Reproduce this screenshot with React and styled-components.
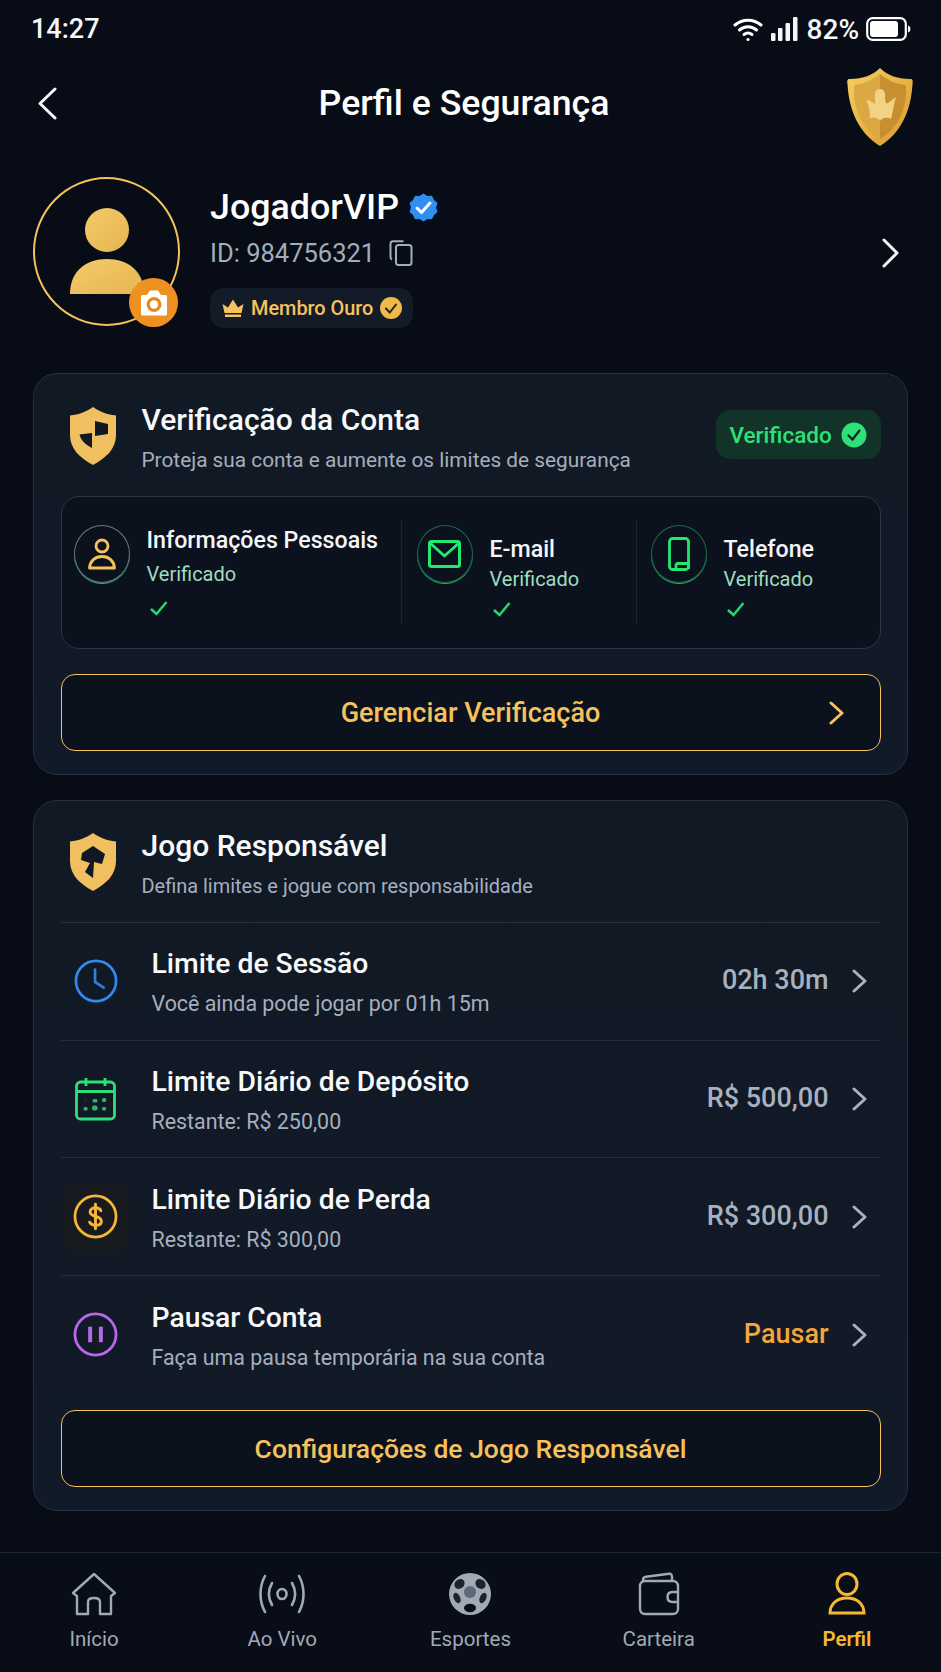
import React from 'react';
import styled, { createGlobalStyle } from 'styled-components';

const GlobalStyle = createGlobalStyle`
  html, body {
    margin: 0;
    padding: 0;
    background: #070c16;
  }
  * { box-sizing: border-box; }
`;

const GOLD = '#f5c25c';
const GREEN = '#2fe07a';

const Page = styled.div`
  width: 941px;
  height: 1672px;
  overflow: hidden;
  display: flex;
  flex-direction: column;
  background: #070c16;
  color: #fff;
  font-family: Roboto, "Noto Sans", sans-serif;
`;

const StatusBar = styled.div`
  height: 56px;
  padding: 2px 30px 0 31px;
  display: flex;
  align-items: center;
  justify-content: space-between;
  font-size: 27px;
  font-weight: 500;
  color: #f6f7f9;
`;

const StatusRight = styled.div`
  display: flex;
  align-items: center;
  gap: 7px;
  font-size: 28px;
`;

const TopBar = styled.header`
  height: 94px;
  padding: 0 28px 0 38px;
  display: flex;
  align-items: center;
  justify-content: space-between;
`;

const PageTitle = styled.h1`
  margin: 0 0 0 24px;
  font-size: 35.7px;
  font-weight: 500;
  line-height: 40px;
`;

const TopShield = styled.div`
  margin-top: 7px;
  display: flex;
`;

const Profile = styled.section`
  margin: 27px 33px 0;
  height: 149px;
  display: flex;
  align-items: flex-start;
`;

const Avatar = styled.div`
  position: relative;
  flex: none;
  width: 147px;
  height: 149px;
  padding-top: 3px;
  border: 2.5px solid ${GOLD};
  border-radius: 50%;
  display: flex;
  align-items: center;
  justify-content: center;
`;

const CameraBadge = styled.div`
  position: absolute;
  right: 0;
  bottom: -3px;
  width: 49px;
  height: 49px;
  border-radius: 50%;
  background: #ee9120;
  display: flex;
  align-items: center;
  justify-content: center;
`;

const ProfileInfo = styled.div`
  margin-left: 30px;
  flex: 1;
  display: flex;
  flex-direction: column;
  align-items: flex-start;
`;

const NameRow = styled.div`
  margin-top: 9px;
  display: flex;
  align-items: center;
  gap: 10px;
  font-size: 35.8px;
  font-weight: 500;
  line-height: 42px;
`;

const IdRow = styled.div`
  margin-top: 11px;
  display: flex;
  align-items: center;
  gap: 14px;
  font-size: 25.5px;
  line-height: 28px;
  color: #a3adbb;
`;

const MemberBadge = styled.div`
  margin-top: 21px;
  height: 40px;
  padding: 0 11px 0 12px;
  display: flex;
  align-items: center;
  gap: 7px;
  border-radius: 14px;
  background: #141b28;
  color: ${GOLD};
  font-size: 19.9px;
  font-weight: 500;
`;

const ProfileArrow = styled.div`
  align-self: center;
  margin-right: 9px;
  margin-top: 2px;
  color: #f0f2f5;
  display: flex;
`;

const Card = styled.section`
  margin: ${(p) => p.$top}px 33px 0;
  padding: ${(p) => p.$padTop}px 26.5px 23px;
  border: 1.5px solid #262f3e;
  border-radius: 24px;
  background: linear-gradient(180deg, #111925 0%, #111a28 100%);
`;

const CardHead = styled.div`
  display: flex;
  align-items: flex-start;
`;

const HeadIcon = styled.div`
  flex: none;
  width: 46px;
  margin-left: 9px;
  margin-top: ${(p) => p.$top || 0}px;
  display: flex;
`;

const HeadText = styled.div`
  margin-left: 26px;
  flex: 1;
`;

const CardTitle = styled.h2`
  margin: 0;
  font-size: 30px;
  font-weight: 500;
  line-height: 36px;
  color: #f8f9fb;
`;

const CardSub = styled.p`
  margin: 9px 0 0;
  font-size: ${(p) => p.$size}px;
  line-height: 26px;
  color: #a5afbd;
`;

const StatusPill = styled.div`
  margin-top: 8px;
  margin-bottom: 2px;
  height: 49px;
  width: 165px;
  padding: 0 14px;
  display: flex;
  align-items: center;
  justify-content: space-between;
  border-radius: 14px;
  background: #123327;
  color: ${GREEN};
  font-size: 22.5px;
  font-weight: 500;
`;

const VerifyPanel = styled.div`
  margin-top: 23px;
  height: 153px;
  padding-top: 24px;
  display: grid;
  grid-template-columns: 339px 235px 1fr;
  border: 1.5px solid #2c3646;
  border-radius: 18px;
  background: #0c121d;
`;

const VerifyItem = styled.div`
  height: 102px;
  padding-left: ${(p) => p.$pad}px;
  display: flex;
  align-items: flex-start;
  gap: 17px;
  border-left: ${(p) => (p.$divider ? '1px solid #1c2533' : 'none')};
`;

const IconRing = styled.div`
  flex: none;
  width: 56px;
  height: 58px;
  margin-top: 4px;
  border-radius: 50%;
  border: 1.5px solid ${(p) => p.$color};
  box-shadow: 0 1px 0 0 #25b868;
  display: flex;
  align-items: center;
  justify-content: center;
`;

const VerifyText = styled.div`
  padding-top: ${(p) => p.$top}px;
`;

const VerifyName = styled.div`
  font-size: 23.2px;
  font-weight: 500;
  line-height: 28px;
  color: #f5f6f8;
`;

const VerifyState = styled.div`
  margin-top: ${(p) => p.$gap}px;
  font-size: 20px;
  line-height: 24px;
  color: #9fdcc0;
`;

const VerifyTick = styled.div`
  margin: ${(p) => p.$gap}px 0 0 3px;
  display: flex;
`;

const OutlineButton = styled.button`
  width: 100%;
  height: 77px;
  margin-top: ${(p) => p.$top}px;
  padding: 0;
  position: relative;
  display: flex;
  align-items: center;
  justify-content: center;
  border: 1.5px solid ${GOLD};
  border-radius: 14px;
  background: #0c121d;
  color: ${GOLD};
  font-family: inherit;
  font-size: ${(p) => p.$size}px;
  font-weight: 500;
`;

const ButtonArrow = styled.span`
  position: absolute;
  right: 36px;
  top: 50%;
  margin-top: -12px;
  display: flex;
`;

const RowList = styled.div`
  margin-top: 23px;
  border-top: 1.5px solid #263040;
`;

const LimitRow = styled.div`
  height: 117.7px;
  display: flex;
  align-items: center;
  border-bottom: ${(p) => (p.$last ? 'none' : '1.5px solid #232d3c')};
`;

const RowIcon = styled.div`
  flex: none;
  width: 68px;
  height: 68px;
  margin-left: 1px;
  border-radius: 14px;
  background: ${(p) => p.$bg || 'transparent'};
  display: flex;
  align-items: center;
  justify-content: center;
`;

const RowText = styled.div`
  margin-left: 22px;
  padding-top: 2px;
  flex: 1;
`;

const RowTitle = styled.div`
  font-size: 28.3px;
  font-weight: 500;
  line-height: 34px;
  color: #f8f9fb;
`;

const RowSub = styled.div`
  margin-top: 10px;
  font-size: 21.4px;
  line-height: 26px;
  color: #a5afbd;
`;

const RowValue = styled.div`
  margin-bottom: 2px;
  font-size: 27px;
  font-weight: 500;
  color: ${(p) => (p.$accent ? '#f5a53a' : '#a8b1be')};
`;

const RowArrow = styled.div`
  width: 52px;
  padding-left: 23px;
  color: #a8b1be;
  display: flex;
`;

const BottomNav = styled.nav`
  margin-top: auto;
  height: 120px;
  display: grid;
  grid-template-columns: repeat(5, 1fr);
  border-top: 1.5px solid #1e2632;
  background: #080d17;
`;

const NavItem = styled.div`
  padding-top: 18px;
  display: flex;
  flex-direction: column;
  align-items: center;
  color: ${(p) => (p.$active ? '#f7b733' : '#a0a9b6')};
`;

const NavIconBox = styled.div`
  height: 46px;
  display: flex;
  align-items: center;
  justify-content: center;
`;

const NavLabel = styled.span`
  margin-top: 10px;
  font-size: 20.5px;
  line-height: 24px;
  font-weight: ${(p) => (p.$active ? 600 : 400)};
`;

// thin open chevron, the reference ones are longer than lucide's at these weights
const Chevron = ({ left, w, h, weight = 3, color = 'currentColor' }) => (
  <svg width={w} height={h} viewBox={`0 0 ${w} ${h}`} fill="none" stroke={color} strokeWidth={weight} strokeLinecap="round" strokeLinejoin="round">
    <path d={left ? `M${w - 2} 2L2 ${h / 2}L${w - 2} ${h - 2}` : `M2 2L${w - 2} ${h / 2}L2 ${h - 2}`} />
  </svg>
);

const Wifi = () => (
  <svg width="30" height="26" viewBox="0 0 30 26" fill="none" stroke="#fff" strokeWidth="3" strokeLinecap="round">
    <path d="M2 9C9.500 2.500 20.500 2.500 28 9" />
    <path d="M6.500 14C11.500 9.800 18.500 9.800 23.500 14" />
    <path d="M11 18.500C13.300 16.800 16.700 16.800 19 18.500" />
    <circle cx="15" cy="23.500" r="1.600" fill="#fff" stroke="none" />
  </svg>
);

const Signal = () => (
  <svg width="30" height="24" viewBox="0 0 30 24" fill="#f4f5f7">
    <rect x="1" y="16" width="4.500" height="8" rx="1" />
    <rect x="8" y="11" width="4.500" height="13" rx="1" />
    <rect x="15.500" y="6" width="4.500" height="18" rx="1" />
    <rect x="23" y="0" width="4.500" height="24" rx="1" />
  </svg>
);

const Battery = () => (
  <svg width="45" height="24" viewBox="0 0 45 24" fill="none">
    <rect x="1.200" y="1.200" width="38.600" height="21.600" rx="5.500" stroke="#fff" strokeWidth="2.200" />
    <rect x="4" y="4" width="28" height="16" rx="3" fill="#fff" />
    <path d="M42 8.500c1.600.5 2.400 1.800 2.400 3.500s-.8 3-2.400 3.500z" fill="#fff" />
  </svg>
);

const GoldShield = () => (
  <svg width="66" height="80" viewBox="0 0 66 80">
    <defs>
      <linearGradient id="rim" x1="0" y1="0" x2="1" y2="1">
        <stop offset="0" stopColor="#f7cf63" />
        <stop offset="1" stopColor="#d99a2b" />
      </linearGradient>
    </defs>
    <path d="M33 1C40 8 50 12 63 12C66 12 66 14 65.500 17C64 44 54 66 33 79C12 66 2 44 .5 17C0 14 0 12 3 12C16 12 26 8 33 1Z" fill="url(#rim)" />
    <path d="M33 7C26 13 17 17 7 18C6 40 13 60 33 72Z" fill="#dba843" />
    <path d="M33 7C40 13 49 17 59 18C60 40 53 60 33 72Z" fill="#c68f30" />
    <path d="M33 22C37 22 39 26 38 31C38 35 39 37 41 36C44 34 46 32 49 30C47 36 46 44 44 52C40 50 36 50 33 54C31 50 27 50 23 51C23 44 22 38 19 33C22 33 25 35 28 37C29 34 27 30 28 27C28 24 30 22 33 22Z" fill="#f3d283" />
  </svg>
);

const PersonBig = () => (
  <svg width="76" height="90" viewBox="0 0 76 90">
    <defs>
      <linearGradient id="person" x1="0" y1="0" x2="1" y2="1">
        <stop offset="0" stopColor="#f4cb6a" />
        <stop offset="1" stopColor="#e6b550" />
      </linearGradient>
    </defs>
    <ellipse cx="38" cy="22" rx="22" ry="22" fill="url(#person)" />
    <path d="M1 86C1 63 17 51 38 51C59 51 75 63 75 86Z" fill="url(#person)" />
  </svg>
);

const Camera = () => (
  <svg width="30" height="28" viewBox="0 0 30 28">
    <path d="M2 7.500C2 6.500 3 6 4 6H8L11 1.500H19L22 6H26C27 6 28 6.500 28 7.500V25C28 26 27 26.500 26 26.500H4C3 26.500 2 26 2 25Z" fill="#fff" />
    <circle cx="15" cy="15.500" r="7.400" fill="#e58a1f" />
    <circle cx="15" cy="15.500" r="4.200" fill="#fff" />
  </svg>
);

const VerifiedSeal = () => (
  <svg width="29" height="29" viewBox="0 0 29 29">
    <path d="M14.500 .5L18.500 3L23 2.800L25 7L28.500 10L27 14.500L28.500 19L25 22L23 26.200L18.500 26L14.500 28.500L10.500 26L6 26.200L4 22L.5 19L2 14.500L.5 10L4 7L6 2.800L10.500 3Z" fill="#2f8ff0" />
    <path d="M8 15L12.500 19.500L21 10" fill="none" stroke="#fff" strokeWidth="3" strokeLinecap="round" strokeLinejoin="round" />
  </svg>
);

const CopyIcon = () => (
  <svg width="24" height="26" viewBox="0 0 24 26" fill="none" stroke="#a3adbb" strokeWidth="2">
    <rect x="7" y="5" width="15.500" height="20" rx="2.500" />
    <path d="M3 19.500C1.900 19 1.500 18 1.500 17V4C1.500 2.500 2.500 1.200 4 1.200H14.500" />
  </svg>
);

const CrownIcon = () => (
  <svg width="22" height="20" viewBox="0 0 22 20" fill={GOLD}>
    <path d="M2.500 15L.5 6L6 9.500L11 1.500L16 9.500L21.500 6L19.500 15Z" />
    <rect x="3" y="16.500" width="16" height="2.500" />
  </svg>
);

const GoldTick = () => (
  <svg width="22" height="22" viewBox="0 0 22 22">
    <circle cx="11" cy="11" r="11" fill="#f0b94a" />
    <path d="M6 11.500L9.800 15.500L16 7.500" fill="none" stroke="#2a2312" strokeWidth="2" strokeLinecap="round" />
  </svg>
);

const GreenTick = () => (
  <svg width="26" height="26" viewBox="0 0 26 26">
    <circle cx="13" cy="13" r="12.500" fill={GREEN} />
    <path d="M7.500 13.500L11.500 17.500L18.500 8.500" fill="none" stroke="#0d2a1c" strokeWidth="2.200" strokeLinecap="round" />
  </svg>
);

const SmallTick = () => (
  <svg width="18" height="15" viewBox="0 0 18 15" fill="none" stroke="#25d96f" strokeWidth="2.500">
    <path d="M1 8L6.500 13L16.500 1" />
  </svg>
);

const ShieldFlag = () => (
  <svg width="46" height="58" viewBox="0 0 46 58">
    <path d="M23 0C30 5 37 7.500 46 8.500V28C46 42 36 51 23 58C10 51 0 42 0 28V8.500C9 7.500 16 5 23 0Z" fill="#f0bf60" />
    <path d="M25 14L38 17V27L25 29Z" fill="#101824" />
    <path d="M9.500 27.500L22 26V41C16 38 11 34 9.500 27.500Z" fill="#101824" />
  </svg>
);

const ShieldStar = () => (
  <svg width="46" height="58" viewBox="0 0 46 58">
    <path d="M23 0C30 5 37 7.500 46 8.500V28C46 42 36 51 23 58C10 51 0 42 0 28V8.500C9 7.500 16 5 23 0Z" fill="#f0bf60" />
    <path d="M23 13L35 21L32 31L24 29L23 45L15 39L20 30L11 27L12 20Z" fill="#101824" />
  </svg>
);

const PersonLine = () => (
  <svg width="28" height="32" viewBox="0 0 28 32" fill="none" stroke={GOLD} strokeWidth="2.800" strokeLinejoin="round">
    <circle cx="14" cy="8" r="6" />
    <path d="M1.500 30C2 23 7 18.500 14 18.500C21 18.500 26 23 26.500 30Z" />
  </svg>
);

const MailLine = () => (
  <svg width="33" height="28" viewBox="0 0 33 28" fill="none" stroke="#22e870" strokeWidth="3" strokeLinejoin="round">
    <rect x="1.500" y="1.500" width="30" height="25" rx="2" />
    <path d="M2 3L16.500 16L31 3" />
  </svg>
);

const PhoneLine = () => (
  <svg width="22" height="34" viewBox="0 0 22 34" fill="none" stroke="#22e870" strokeWidth="2.800" strokeLinejoin="round">
    <rect x="1.500" y="1.500" width="19" height="31" rx="3" />
    <path d="M8 26.500H20.500V32" />
    <path d="M8 26.500V32" />
  </svg>
);

const ClockLine = () => (
  <svg width="44" height="44" viewBox="0 0 46 46" fill="none" stroke="#3189ee" strokeWidth="2.800" strokeLinecap="round">
    <circle cx="23" cy="23" r="21" />
    <path d="M22 11V24L31 30" stroke="#2f7fdc" />
  </svg>
);

const CalendarLine = () => (
  <svg width="41" height="44" viewBox="0 0 41 44" fill="none" stroke={GREEN} strokeWidth="2.800">
    <rect x="1.500" y="5" width="38" height="37" rx="4" />
    <path d="M1.500 14.500H39.500M11 1V9M30 1V9" />
    <g stroke="none">
      <circle cx="10.500" cy="23" r="2" fill="#1a2b2b" />
      <rect x="17.500" y="22" width="5" height="3.600" rx="1.600" fill="#2fb566" />
      <rect x="27" y="21" width="4.200" height="4" rx="1.500" fill="#2fb566" />
      <rect x="8.500" y="30" width="4.200" height="3.500" rx="1.500" fill="#2fb566" />
      <rect x="17" y="28.500" width="5.500" height="5" rx="2" fill="#2fb566" />
      <rect x="27" y="30" width="4.200" height="3.500" rx="1.500" fill="#2fb566" />
    </g>
  </svg>
);

const DollarLine = () => (
  <svg width="45" height="45" viewBox="0 0 46 46" fill="none" stroke="#f7b733" strokeWidth="2.800" strokeLinecap="round">
    <circle cx="23" cy="23" r="21" />
    <path d="M28.500 17C27.500 15 26 14 23 14C20 14 17.500 15.700 17.500 18.300C17.500 24 29 21.500 29 27.800C29 30.500 26.500 32 23 32C20 32 18 30.800 17 28.800" strokeWidth="3" />
    <path d="M23 10.500V35.500" strokeWidth="3" />
  </svg>
);

const PauseLine = () => (
  <svg width="45" height="45" viewBox="0 0 46 46" fill="none" stroke="#b669e8" strokeWidth="2.800">
    <circle cx="23" cy="23" r="21" />
    <path d="M17.500 15V31M28.500 15V31" strokeWidth="4" />
  </svg>
);

const HomeNav = () => (
  <svg width="46" height="44" viewBox="0 0 46 44" fill="none" stroke="currentColor" strokeWidth="2.400" strokeLinejoin="round">
    <path d="M2 21L23 2L44 21L40 24V42H29V30C29 27 27 26 23 26C19 26 17 27 17 30V42H6V24Z" />
  </svg>
);

const LiveNav = () => (
  <svg width="48" height="42" viewBox="0 0 48 42" fill="none" stroke="currentColor" strokeWidth="2.600" strokeLinecap="round">
    <ellipse cx="24" cy="21" rx="4.500" ry="5" />
    <path d="M14 10C10 17 10 25 14 32M34 10C38 17 38 25 34 32" />
    <path d="M7 3C1 14 1 28 7 39M41 3C47 14 47 28 41 39" />
  </svg>
);

const BallNav = () => (
  <svg width="44" height="44" viewBox="0 0 44 44">
    <circle cx="22" cy="22" r="21" fill="currentColor" />
    <g fill="#1d232d">
      <ellipse cx="11.500" cy="12" rx="5.500" ry="4.500" transform="rotate(-40 11.500 12)" />
      <ellipse cx="32.500" cy="12" rx="5.500" ry="4.500" transform="rotate(40 32.500 12)" />
      <ellipse cx="35" cy="26" rx="3.200" ry="5.500" transform="rotate(25 35 26)" />
      <ellipse cx="9" cy="26" rx="3.200" ry="5.500" transform="rotate(-25 9 26)" />
    </g>
    <ellipse cx="22" cy="36" rx="6" ry="4.200" fill="#080d17" />
    <circle cx="22" cy="20" r="6" fill="#5f6875" />
  </svg>
);

const WalletNav = () => (
  <svg width="42" height="44" viewBox="0 0 42 44" fill="none" stroke="currentColor" strokeWidth="2.400">
    <rect x="2" y="9" width="38" height="33" rx="5" />
    <path d="M5 9V8C5 6 6 5 8 4.800L31 1.800C33 1.600 34 3 34 5V9" />
    <path d="M40 20H34.500C31.500 20 29.500 22 29.500 25C29.500 28 31.500 30 34.500 30H40" />
  </svg>
);

const ProfileNav = () => (
  <svg width="38" height="44" viewBox="0 0 38 44" fill="none" stroke="currentColor" strokeWidth="3">
    <ellipse cx="19" cy="12" rx="10" ry="10.500" />
    <path d="M2 41C2 32 9 26 19 26C29 26 36 32 36 41Z" />
  </svg>
);

const verifyItems = [
  { name: 'Informações Pessoais', Icon: PersonLine, ring: '#5f7f80', pad: 12, top: 5, gap: 8, tick: 15 },
  { name: 'E-mail', Icon: MailLine, ring: '#1c6a44', pad: 15, top: 14, gap: 4, tick: 11, divider: true },
  { name: 'Telefone', Icon: PhoneLine, ring: '#1c6a44', pad: 14, top: 14, gap: 4, tick: 11, divider: true },
];

const limits = [
  { title: 'Limite de Sessão', sub: 'Você ainda pode jogar por 01h 15m', value: '02h 30m', Icon: ClockLine },
  { title: 'Limite Diário de Depósito', sub: 'Restante: R$ 250,00', value: 'R$ 500,00', Icon: CalendarLine },
  { title: 'Limite Diário de Perda', sub: 'Restante: R$ 300,00', value: 'R$ 300,00', Icon: DollarLine, tile: '#171a1f' },
  { title: 'Pausar Conta', sub: 'Faça uma pausa temporária na sua conta', value: 'Pausar', Icon: PauseLine, accent: true },
];

const navItems = [
  { label: 'Início', Icon: HomeNav },
  { label: 'Ao Vivo', Icon: LiveNav },
  { label: 'Esportes', Icon: BallNav },
  { label: 'Carteira', Icon: WalletNav },
  { label: 'Perfil', Icon: ProfileNav, active: true },
];

export default function App() {
  return (
    <Page>
      <GlobalStyle />
      <StatusBar>
        <span>14:27</span>
        <StatusRight>
          <Wifi />
          <Signal />
          <span>82%</span>
          <Battery />
        </StatusRight>
      </StatusBar>

      <TopBar>
        <Chevron left w={19} h={33} weight={3} color="#f4f5f7" />
        <PageTitle>Perfil e Segurança</PageTitle>
        <TopShield>
          <GoldShield />
        </TopShield>
      </TopBar>

      <Profile>
        <Avatar>
          <PersonBig />
          <CameraBadge>
            <Camera />
          </CameraBadge>
        </Avatar>
        <ProfileInfo>
          <NameRow>
            JogadorVIP
            <VerifiedSeal />
          </NameRow>
          <IdRow>
            ID: 984756321
            <CopyIcon />
          </IdRow>
          <MemberBadge>
            <CrownIcon />
            Membro Ouro
            <GoldTick />
          </MemberBadge>
        </ProfileInfo>
        <ProfileArrow>
          <Chevron w={17} h={30} weight={3} />
        </ProfileArrow>
      </Profile>

      <Card $top={47} $padTop={28}>
        <CardHead>
          <HeadIcon $top={5}>
            <ShieldFlag />
          </HeadIcon>
          <HeadText>
            <CardTitle>Verificação da Conta</CardTitle>
            <CardSub $size={20.8}>Proteja sua conta e aumente os limites de segurança</CardSub>
          </HeadText>
          <StatusPill>
            Verificado
            <GreenTick />
          </StatusPill>
        </CardHead>

        <VerifyPanel>
          {verifyItems.map(({ name, Icon, ring, pad, top, gap, tick, divider }) => (
            <VerifyItem key={name} $pad={pad} $divider={divider}>
              <IconRing $color={ring}>
                <Icon />
              </IconRing>
              <VerifyText $top={top}>
                <VerifyName>{name}</VerifyName>
                <VerifyState $gap={gap}>Verificado</VerifyState>
                <VerifyTick $gap={tick}>
                  <SmallTick />
                </VerifyTick>
              </VerifyText>
            </VerifyItem>
          ))}
        </VerifyPanel>

        <OutlineButton $top={25} $size={27}>
          Gerenciar Verificação
          <ButtonArrow>
            <Chevron w={15} h={24} weight={3} />
          </ButtonArrow>
        </OutlineButton>
      </Card>

      <Card $top={25} $padTop={27}>
        <CardHead>
          <HeadIcon $top={5}>
            <ShieldStar />
          </HeadIcon>
          <HeadText>
            <CardTitle>Jogo Responsável</CardTitle>
            <CardSub $size={19.95}>Defina limites e jogue com responsabilidade</CardSub>
          </HeadText>
        </CardHead>

        <RowList>
          {limits.map(({ title, sub, value, Icon, tile, accent }, i) => (
            <LimitRow key={title} $last={i === limits.length - 1}>
              <RowIcon $bg={tile}>
                <Icon />
              </RowIcon>
              <RowText>
                <RowTitle>{title}</RowTitle>
                <RowSub>{sub}</RowSub>
              </RowText>
              <RowValue $accent={accent}>{value}</RowValue>
              <RowArrow>
                <Chevron w={15} h={24} weight={3} />
              </RowArrow>
            </LimitRow>
          ))}
        </RowList>

        <OutlineButton $top={16} $size={26.5}>
          Configurações de Jogo Responsável
        </OutlineButton>
      </Card>

      <BottomNav>
        {navItems.map(({ label, Icon, active }) => (
          <NavItem key={label} $active={active}>
            <NavIconBox>
              <Icon />
            </NavIconBox>
            <NavLabel $active={active}>{label}</NavLabel>
          </NavItem>
        ))}
      </BottomNav>
    </Page>
  );
}
